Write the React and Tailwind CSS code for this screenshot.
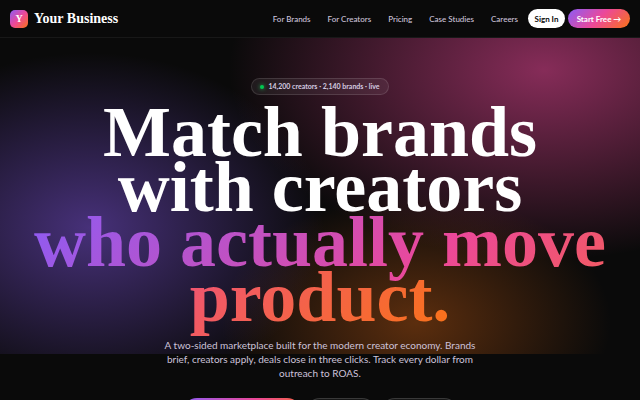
import React from "react";
import clsx from "clsx";

const navLinks = ["For Brands", "For Creators", "Pricing", "Case Studies", "Careers"];

const Header = () => (
  <header className="flex items-center justify-between h-[38px] px-[10px] border-b border-white/6 bg-[#0a0a0a]">
    {/* Logo */}
    <a href="#" className="flex items-center gap-[6px]">
      <span className="w-[18px] h-[18px] rounded-[5px] bg-[linear-gradient(135deg,#8b5cf6,#ec4899_50%,#f97316)] flex items-center justify-center font-['Liberation_Serif',serif] font-bold text-[10px] leading-none">
        Y
      </span>
      <span className="font-['Liberation_Serif',serif] font-bold text-[14px] leading-none">Your Business</span>
    </a>

    {/* Links + actions */}
    <div className="flex items-center gap-[10px]">
      <nav className="flex items-center gap-[17px] text-[8px] font-medium text-[#cdc3da]">
        {navLinks.map((label) => (
          <a key={label} href="#" className="whitespace-nowrap hover:text-white">
            {label}
          </a>
        ))}
      </nav>
      <div className="flex items-center gap-[3px] text-[8px] font-bold">
        <button className="h-[19px] w-[37px] rounded-full bg-white text-[#0a0a0a] whitespace-nowrap">Sign In</button>
        <button className="h-[19px] w-[62px] rounded-full bg-[linear-gradient(135deg,#8b5cf6,#ec4899_50%,#f97316)] whitespace-nowrap">
          Start Free →
        </button>
      </div>
    </div>
  </header>
);

const actions = [
  { label: "Primary", className: "w-[118px] bg-[linear-gradient(135deg,#8b5cf6,#ec4899_50%,#f97316)]" },
  { label: "Secondary", className: "w-[70px] bg-white/5 border border-white/15" },
  { label: "More", className: "w-[77px] bg-white/5 border border-white/15" },
];

const Hero = () => (
  <section className="flex flex-col items-center px-5 pt-10 pb-10 text-center bg-no-repeat bg-size-[100%_316px] bg-[radial-gradient(315px_190px_at_85%_10%,rgba(236,72,153,0.55),transparent),radial-gradient(235px_175px_at_14%_60%,rgba(139,92,246,0.47),transparent),radial-gradient(195px_130px_at_65%_90%,rgba(249,115,22,0.34),transparent)]">
    {/* Live badge */}
    <div className="flex items-center gap-[4px] h-[17px] px-[8px] rounded-full border border-white/12 bg-white/6 text-[7px] font-bold text-[#d4cbe0]">
      <span className="w-[4px] h-[4px] rounded-full bg-green-500 shadow-[0_0_4px_#22c55e]"></span>
      14,200 creators · 2,140 brands · live
    </div>

    <h1 className="mt-[10px] font-['Liberation_Serif',serif] font-bold text-[72px] leading-[55px]">
      Match brands
      <br />
      with creators
      <br />
      <span className="bg-[linear-gradient(135deg,#8b5cf6,#ec4899_50%,#f97316)] bg-clip-text text-transparent">
        who actually move product.
      </span>
    </h1>

    <p className="mt-[13px] max-w-[322px] text-[10px] leading-[14px] text-[#cdc3da]">
      A two-sided marketplace built for the modern creator economy. Brands brief, creators apply, deals close in three
      clicks. Track every dollar from outreach to ROAS.
    </p>

    <div className="mt-[18px] flex gap-[5px]">
      {actions.map((a) => (
        <button key={a.label} aria-label={a.label} className={clsx("h-7 rounded-full", a.className)} />
      ))}
    </div>
  </section>
);

const App = () => {
  return (
    <div className="min-h-screen bg-[#0a0a0a] text-white font-['Lato',sans-serif]">
      <Header />
      <Hero />
    </div>
  );
};

export default App;
